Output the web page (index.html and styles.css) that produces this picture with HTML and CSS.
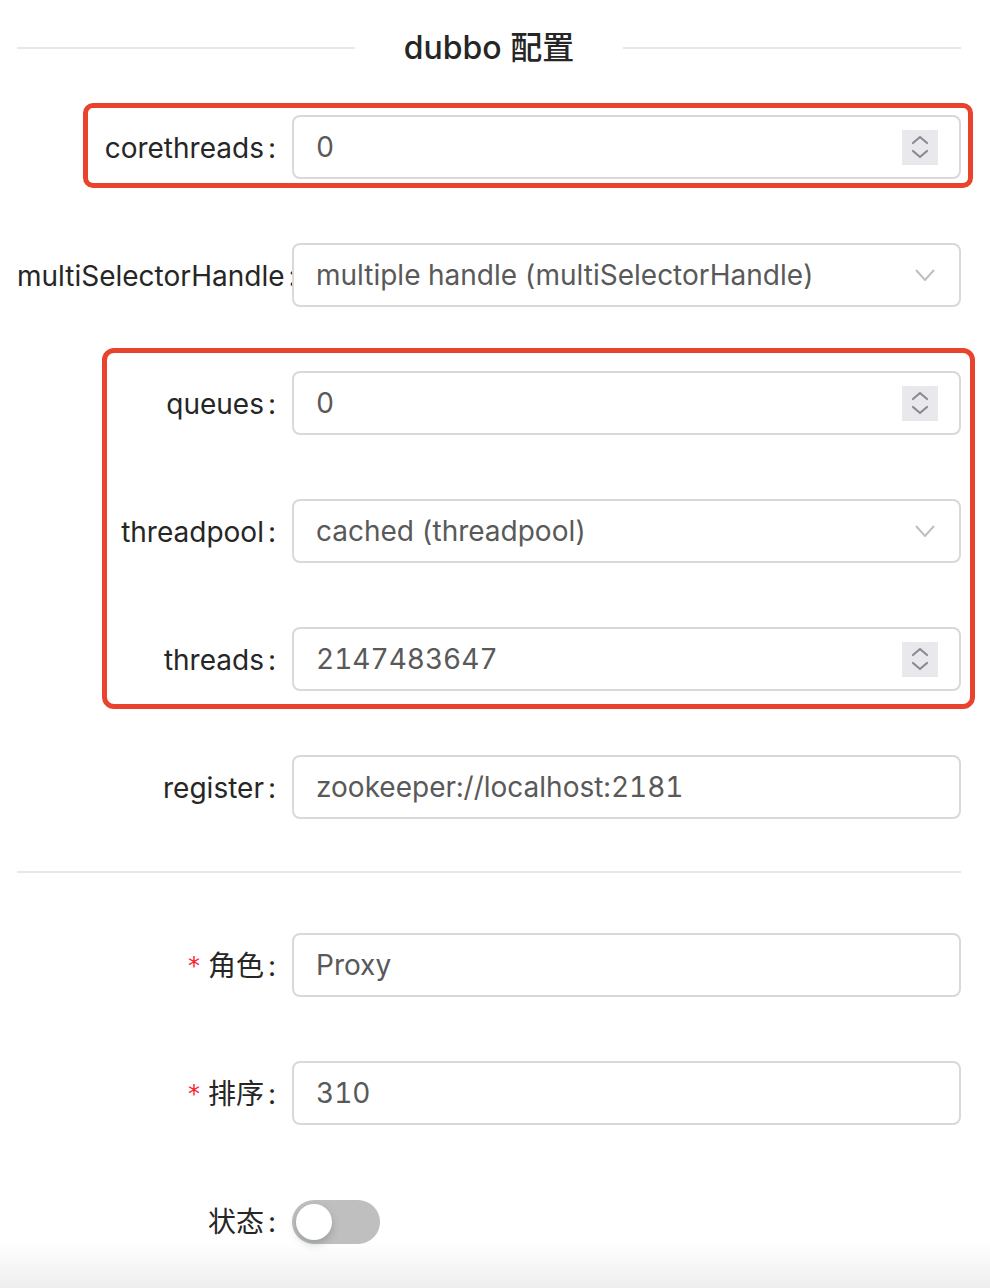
FILE: index.html
```html
<!DOCTYPE html>
<html lang="zh-CN">
<head>
<meta charset="utf-8">
<title>dubbo 配置</title>
<link rel="stylesheet" href="styles.css">
</head>
<body>
<div class="page">
  <form class="form">
    <div class="divider-title">
      <span class="line"></span>
      <span class="title-text">dubbo 配置</span>
      <span class="line"></span>
    </div>

    <div class="item">
      <div class="label"><label>corethreads</label></div>
      <div class="control">
        <div class="input number"><span class="value">0</span>
          <span class="spinner"><svg width="36" height="35" viewBox="0 0 36 35"><polyline points="11,13 18,7 25,13" /><polyline points="11,21 18,27 25,21" /></svg></span>
        </div>
      </div>
    </div>

    <div class="item">
      <div class="label"><label>multiSelectorHandle</label></div>
      <div class="control">
        <div class="input select"><span class="value">multiple handle (multiSelectorHandle)</span>
          <svg class="arrow" width="20" height="12" viewBox="0 0 20 12"><polyline points="1,1 10,11 19,1" /></svg>
        </div>
      </div>
    </div>

    <div class="item">
      <div class="label"><label>queues</label></div>
      <div class="control">
        <div class="input number"><span class="value">0</span>
          <span class="spinner"><svg width="36" height="35" viewBox="0 0 36 35"><polyline points="11,13 18,7 25,13" /><polyline points="11,21 18,27 25,21" /></svg></span>
        </div>
      </div>
    </div>

    <div class="item">
      <div class="label"><label>threadpool</label></div>
      <div class="control">
        <div class="input select"><span class="value">cached (threadpool)</span>
          <svg class="arrow" width="20" height="12" viewBox="0 0 20 12"><polyline points="1,1 10,11 19,1" /></svg>
        </div>
      </div>
    </div>

    <div class="item">
      <div class="label"><label>threads</label></div>
      <div class="control">
        <div class="input number"><span class="value">2147483647</span>
          <span class="spinner"><svg width="36" height="35" viewBox="0 0 36 35"><polyline points="11,13 18,7 25,13" /><polyline points="11,21 18,27 25,21" /></svg></span>
        </div>
      </div>
    </div>

    <div class="item last-before-divider">
      <div class="label"><label>register</label></div>
      <div class="control">
        <div class="input"><span class="value">zookeeper://localhost:2181</span></div>
      </div>
    </div>

    <div class="divider"></div>

    <div class="item">
      <div class="label"><label class="required">角色</label></div>
      <div class="control">
        <div class="input"><span class="value">Proxy</span></div>
      </div>
    </div>

    <div class="item">
      <div class="label"><label class="required">排序</label></div>
      <div class="control">
        <div class="input"><span class="value">310</span></div>
      </div>
    </div>

    <div class="item">
      <div class="label"><label>状态</label></div>
      <div class="control">
        <span class="switch"><span class="knob"></span></span>
      </div>
    </div>
  </form>

  <div class="mark mark-1"></div>
  <div class="mark mark-2"></div>
</div>
</body>
</html>
```

FILE: styles.css
```css
html {
  background: linear-gradient(to bottom, #ffffff 0, #ffffff 1242px, #eeeeee 1288px);
  min-height: 1288px;
}

body {
  margin: 0;
  font-family: "Inter", "Noto Sans CJK SC", sans-serif;
  color: #262626;
}

.page {
  position: relative;
  height: 1288px;
  overflow: hidden;
}

.form {
  width: 944px;
  padding: 16px 0 0 17px;
}

.divider-title {
  display: flex;
  align-items: center;
  height: 64px;
  margin-bottom: 35px;
}

.divider-title .line {
  flex: 1;
  height: 2px;
  background: #e8e8e8;
}

.title-text {
  width: 268px;
  text-align: center;
  font-size: 32px;
  font-weight: 500;
  color: #262626;
  line-height: 66px;
  white-space: nowrap;
}

.item {
  display: grid;
  grid-template-columns: 275px 669px;
  height: 64px;
  margin-bottom: 64px;
}

.item.last-before-divider {
  margin-bottom: 52px;
}

.label {
  overflow: hidden;
  white-space: nowrap;
  text-align: right;
  line-height: 66px;
  font-size: 28px;
  color: #262626;
}

.label label::after {
  content: ":";
  margin: 0 16px 0 4px;
}

.label label.required::before {
  content: "*";
  color: #f5222d;
  font-size: 24px;
  margin-right: 8px;
  font-family: "DejaVu Sans", sans-serif;
  position: relative;
  top: -2px;
}

.control {
  display: flex;
  align-items: center;
}

.input {
  box-sizing: border-box;
  width: 669px;
  height: 64px;
  border: 2px solid #d9d9d9;
  border-radius: 8px;
  padding: 0 22px;
  display: flex;
  align-items: center;
  justify-content: space-between;
  font-size: 28px;
  color: #595959;
}

.value {
  white-space: nowrap;
  font-variant-numeric: tabular-nums;
}

.spinner {
  display: block;
  width: 36px;
  height: 35px;
  background: #e8e8ed;
  margin-right: -1px;
}

.spinner svg {
  display: block;
  fill: none;
  stroke: #8a8a94;
  stroke-width: 2.2;
  stroke-linecap: round;
  stroke-linejoin: round;
}

.arrow {
  display: block;
  fill: none;
  stroke: #bfbfbf;
  stroke-width: 2;
  margin-right: 2px;
}

.divider {
  height: 2px;
  background: #e8e8e8;
  margin-bottom: 60px;
}

.switch {
  position: relative;
  display: block;
  width: 88px;
  height: 44px;
  border-radius: 22px;
  background: #bfbfbf;
  margin-top: 2px;
}

.switch .knob {
  position: absolute;
  left: 4px;
  top: 4px;
  width: 36px;
  height: 36px;
  border-radius: 50%;
  background: #ffffff;
  box-shadow: 0 4px 8px rgba(0, 35, 11, 0.2);
}

.mark {
  position: absolute;
  box-sizing: border-box;
  border: 5px solid #e9432d;
  border-radius: 10px;
}

.mark-1 {
  left: 83px;
  top: 103px;
  width: 890px;
  height: 85px;
}

.mark-2 {
  left: 102px;
  top: 348px;
  width: 873px;
  height: 361px;
  border-radius: 12px;
}
```
